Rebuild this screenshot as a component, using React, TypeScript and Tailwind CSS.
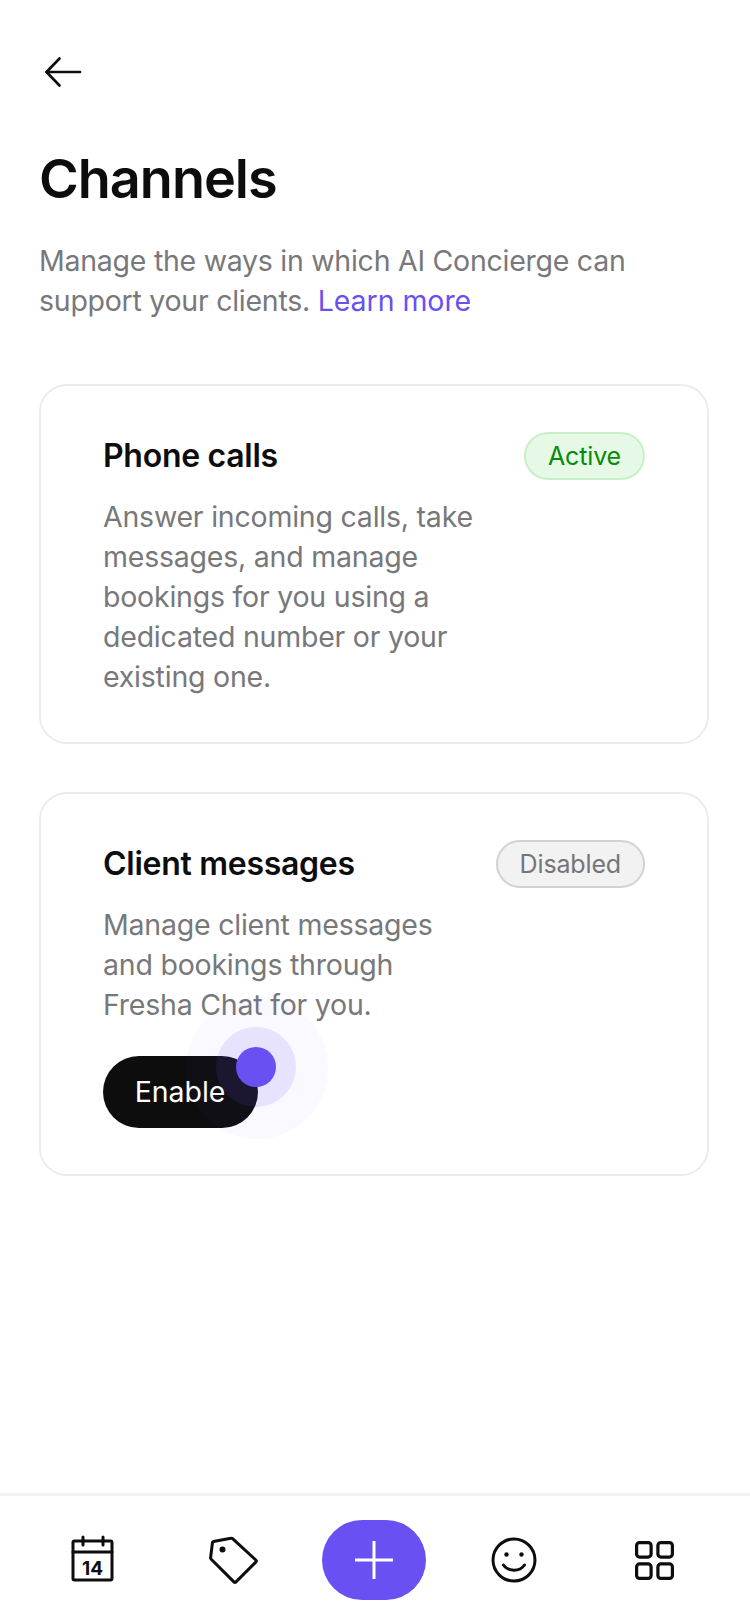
import React from "react";

// 通用文字颜色和字体在这里统一
const FONT = "font-['Inter','Liberation_Sans',sans-serif]";

function BackArrow() {
  return (
    <svg width="38" height="32" viewBox="0 0 38 32" fill="none" stroke="#0d0d0d" strokeWidth="2.6" strokeLinecap="round" strokeLinejoin="round">
      <path d="M2.5 16H36" />
      <path d="M15.5 2.5 2.5 16l13 13.5" />
    </svg>
  );
}

function CalendarIcon() {
  return (
    <svg className="mb-[3px]" width="44" height="48" viewBox="0 0 44 48" fill="none" stroke="#0d0d0d" strokeWidth="3" strokeLinejoin="round" strokeLinecap="round">
      <rect x="2" y="6" width="39" height="39" rx="1.5" />
      <path d="M2 17h39" />
      <path d="M12 2v8M32 2v8" />
      <text x="21.5" y="39.5" textAnchor="middle" fontFamily="Inter, sans-serif" fontWeight="700" fontSize="19" fill="#0d0d0d" stroke="none">
        14
      </text>
    </svg>
  );
}

function TagIcon() {
  return (
    <svg width="50" height="50" viewBox="0 0 50 50" fill="none" stroke="#0d0d0d" strokeWidth="3" strokeLinejoin="round" strokeLinecap="round">
      <path d="M4.500 6.500 21.800 3.200a2 2 0 0 1 1.800.5L46.800 25a1.500 1.500 0 0 1 0 2.100L27 46.900a1.500 1.500 0 0 1-2.100 0L2.200 24.300a2 2 0 0 1-.6-1.700L3.500 7.500a1.200 1.200 0 0 1 1-1Z" />
      <circle cx="13.500" cy="14.500" r="1.500" fill="#0d0d0d" />
    </svg>
  );
}

function SmileIcon() {
  return (
    <svg width="46" height="46" viewBox="0 0 46 46" fill="none" stroke="#0d0d0d" strokeWidth="3" strokeLinecap="round">
      <circle cx="23" cy="23" r="21" />
      <circle cx="15.500" cy="17.500" r="2.200" fill="#0d0d0d" stroke="none" />
      <circle cx="30.500" cy="17.500" r="2.200" fill="#0d0d0d" stroke="none" />
      <path d="M12.500 28c2.500 3.600 6 5.200 10.500 5.200s8-1.600 10.500-5.200" />
    </svg>
  );
}

function GridIcon() {
  return (
    <svg width="39" height="39" viewBox="0 0 39 39" fill="none" stroke="#0d0d0d" strokeWidth="3.2">
      <rect x="1.600" y="1.600" width="14.500" height="14.500" rx="3" />
      <rect x="22.900" y="1.600" width="14.500" height="14.500" rx="3" />
      <rect x="1.600" y="22.900" width="14.500" height="14.500" rx="3" />
      <rect x="22.900" y="22.900" width="14.500" height="14.500" rx="3" />
    </svg>
  );
}

interface ChannelCardProps {
  title: string;
  lines: string[];
  badge: React.ReactNode;
  children?: React.ReactNode;
  className?: string;
}

function ChannelCard({ title, lines, badge, children, className }: ChannelCardProps) {
  return (
    <section className={`rounded-[28px] border-2 border-[#ececed] px-[62px] pt-[46px] ${className ?? ""}`}>
      <div className="flex items-start justify-between">
        <h2 className="pt-[2px] text-[32px] leading-[44px] font-semibold tracking-[-0.28px] text-[#0d0d0d]">{title}</h2>
        {badge}
      </div>
      <p className="mt-[17px] text-[28.5px] leading-[40px] tracking-[-0.22px] text-[#78787b]">
        {lines.map((line) => (
          <span key={line} className="block">
            {line}
          </span>
        ))}
      </p>
      {children}
    </section>
  );
}

export default function App() {
  return (
    <div className={`flex min-h-[1624px] w-[750px] flex-col bg-white ${FONT}`}>
      <main className="flex-1 pr-[41px] pl-[39px] pt-[56px]">
        <div className="pl-[5px]">
          <BackArrow />
        </div>

        <h1 className="mt-[61px] text-[54px] leading-[60px] font-semibold tracking-[-1px] text-[#0d0d0d]">Channels</h1>

        <p className="mt-[32px] text-[28.5px] leading-[40px] tracking-[-0.26px] whitespace-nowrap text-[#78787b]">
          Manage the ways in which AI Concierge can
          <br />
          support your clients. <span className="tracking-[-0.05px] text-[#6950f3]">Learn more</span>
        </p>

        <ChannelCard
          className="mt-[63px] h-[360px]"
          title="Phone calls"
          lines={["Answer incoming calls, take", "messages, and manage", "bookings for you using a", "dedicated number or your", "existing one."]}
          badge={
            <span className="rounded-full border-2 border-[#c9efc9] bg-[#e6f9e6] px-[22px] text-[25px] leading-[44px] tracking-[-0.15px] text-[#078b07]">
              Active
            </span>
          }
        />

        <ChannelCard
          className="mt-[48px] h-[384px]"
          title="Client messages"
          lines={["Manage client messages", "and bookings through", "Fresha Chat for you."]}
          badge={
            <span className="rounded-full border-2 border-[#d3d3d5] bg-[#f2f2f3] px-[22px] text-[25px] leading-[44px] tracking-[-0.15px] text-[#757578]">
              Disabled
            </span>
          }
        >
          <div className="relative mt-[31px] w-fit">
            <button className="h-[72px] w-[155px] rounded-full bg-[#0d0d0d] pr-[1px] text-[28.5px] tracking-[-0.05px] text-white">Enable</button>
            {/* 引导高亮的圆点 */}
            <span className="absolute top-[-59px] left-[83px] h-[142px] w-[142px] rounded-full bg-[#6950f3]/[0.035]" />
            <span className="absolute top-[-29px] left-[113px] h-[80px] w-[80px] rounded-full bg-[#6950f3]/[0.13]" />
            <span className="absolute top-[-9px] left-[133px] h-[40px] w-[40px] rounded-full bg-[#6950f3]" />
          </div>
        </ChannelCard>
      </main>

      <nav className="h-[131px] border-t-[3px] border-[#f2f2f2]">
        <div className="grid grid-cols-5 items-center justify-items-center pt-[24px] pr-[25px] pl-[23px]">
          <CalendarIcon />
          <TagIcon />
          <div className="flex h-[80px] w-[104px] items-center justify-center rounded-full bg-[#6950f3]">
            <svg width="40" height="40" viewBox="0 0 40 40" fill="none" stroke="#fff" strokeWidth="3">
              <path d="M20 1v38M1 20h38" />
            </svg>
          </div>
          <SmileIcon />
          <GridIcon />
        </div>
      </nav>
    </div>
  );
}
